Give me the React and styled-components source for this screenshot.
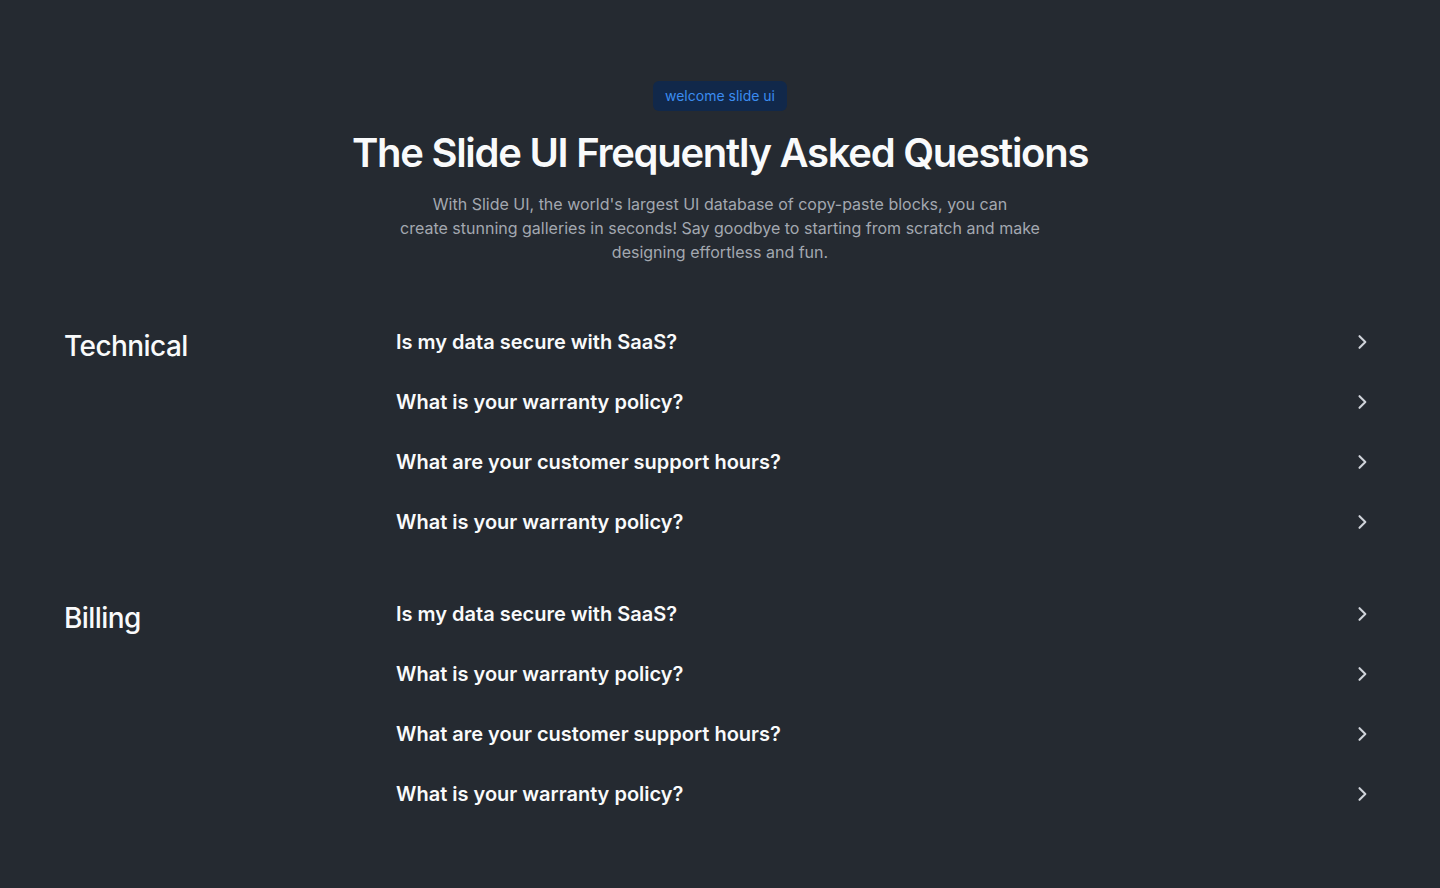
import React from 'react';
import styled, { createGlobalStyle } from 'styled-components';

const GlobalStyle = createGlobalStyle`
  * { box-sizing: border-box; }
  body {
    margin: 0;
    background: #252a31;
    font-family: Inter, "Noto Sans", sans-serif;
    color: #f9fafb;
  }
`;

const Page = styled.div`
  min-height: 888px;
  padding: 81px 64px 60px;
`;

const Header = styled.header`
  display: flex;
  flex-direction: column;
  align-items: center;
  text-align: center;
`;

const Badge = styled.span`
  display: inline-block;
  padding: 6px 12px;
  border-radius: 6px;
  background: #11284a;
  color: #3b8cf0;
  font-size: 14px;
  line-height: 18px;
`;

const Title = styled.h1`
  margin: 18px 0 0;
  font-size: 40px;
  line-height: 48px;
  font-weight: 600;
  letter-spacing: -0.032em;
  color: #f9fafb;
`;

const Lead = styled.p`
  margin: 15px 0 0;
  max-width: 660px;
  font-size: 16px;
  line-height: 24px;
  color: #a3a8b0;
`;

const Sections = styled.div`
  margin-top: 48px;
  display: flex;
  flex-direction: column;
  gap: 32px;
`;

const Section = styled.section`
  display: grid;
  grid-template-columns: 332px 1fr;
`;

const SectionTitle = styled.h2`
  margin: 0;
  padding-top: 16px;
  font-size: 28px;
  line-height: 36px;
  font-weight: 500;
  letter-spacing: -0.02em;
  color: #f9fafb;
`;

const List = styled.div`
  display: flex;
  flex-direction: column;
`;

const Question = styled.button`
  display: flex;
  align-items: center;
  justify-content: space-between;
  width: 100%;
  height: 60px;
  padding: 0 4px 0 0;
  border: 0;
  background: none;
  font-family: inherit;
  font-size: 20px;
  font-weight: 600;
  color: #f9fafb;
  text-align: left;
  cursor: pointer;
`;

const Chevron = () => (
  <svg width="20" height="20" viewBox="0 0 24 24" fill="none" stroke="#cfd3d9" strokeWidth="2.5" strokeLinecap="round" strokeLinejoin="round">
    <path d="m9 5 7 7-7 7" />
  </svg>
);

const questions = [
  'Is my data secure with SaaS?',
  'What is your warranty policy?',
  'What are your customer support hours?',
  'What is your warranty policy?',
];

const sections = ['Technical', 'Billing'];

export default function App() {
  return (
    <>
      <GlobalStyle />
      <Page>
        <Header>
          <Badge>welcome slide ui</Badge>
          <Title>The Slide UI Frequently Asked Questions</Title>
          <Lead>
            With Slide UI, the world's largest UI database of copy-paste blocks, you can
            <br />
            create stunning galleries in seconds! Say goodbye to starting from scratch and make
            <br />
            designing effortless and fun.
          </Lead>
        </Header>
        <Sections>
          {sections.map((name) => (
            <Section key={name}>
              <SectionTitle>{name}</SectionTitle>
              <List>
                {questions.map((q, i) => (
                  <Question key={i}>
                    {q}
                    <Chevron />
                  </Question>
                ))}
              </List>
            </Section>
          ))}
        </Sections>
      </Page>
    </>
  );
}
